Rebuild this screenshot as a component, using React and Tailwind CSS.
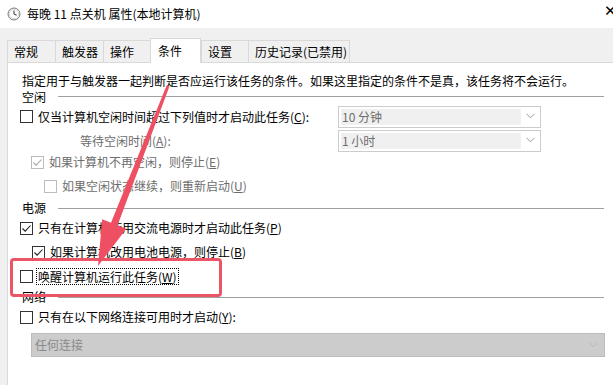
import React from "react";

const FONT = { fontFamily: '"Noto Sans CJK SC", "Noto Sans", sans-serif' };

function Box({ checked, disabled }) {
  const border = disabled ? "border-[#bcbcbc]" : "border-[#333333]";
  return (
    <span className={`inline-flex w-[13px] h-[13px] shrink-0 border ${border} bg-white items-center justify-center`}>
      {checked && (
        <svg width="11" height="11" viewBox="0 0 11 11">
          <path d="M1.5 5.5 L4.2 8.2 L9.5 2.5" fill="none" stroke={disabled ? "#a8a8a8" : "#222"} strokeWidth="1.1" />
        </svg>
      )}
    </span>
  );
}

function Chevron({ color = "#9a9a9a" }) {
  return (
    <svg width="9" height="6" viewBox="0 0 9 6">
      <path d="M0.5 0.8 L4.5 4.8 L8.5 0.8" fill="none" stroke={color} strokeWidth="1" />
    </svg>
  );
}

function Header({ label }) {
  return (
    <div className="flex items-center h-full">
      <span className="ml-[2px] w-[36px] text-black">{label}</span>
      <div className="flex-1 h-px bg-[#a0a0a0] mr-[9px]" />
    </div>
  );
}

function Row({ h, children, className = "" }) {
  return <div className={`flex items-center ${className}`} style={{ height: h }}>{children}</div>;
}

function DisabledCombo({ text }) {
  return (
    <div className="w-[203px] h-[22px] border border-[#cccccc] bg-white flex items-stretch p-[2px] pr-0">
      <div className="flex-1 bg-[#f0f0f0] text-[#6d6d6d] pl-[1px] flex items-center leading-none">{text}</div>
      <div className="w-[19px] flex items-center justify-center pb-[1px]">
        <Chevron />
      </div>
    </div>
  );
}

export default function App() {
  const tabs = [
    { t: "常规", w: 48 },
    { t: "触发器", w: 48 },
    { t: "操作", w: 47 },
    { t: "条件", w: 51, sel: true },
    { t: "设置", w: 47 },
    { t: "历史记录(已禁用)", w: 102 },
  ];
  return (
    <div className="relative w-[613px] h-[385px] overflow-hidden bg-[#f0f0f0] text-[12px] text-black" style={FONT}>
      {/* title bar */}
      <div className="h-[28px] bg-white flex items-center relative">
        <svg className="ml-[7px]" width="14" height="14" viewBox="0 0 14 14">
          <circle cx="7" cy="7" r="6" fill="#f4f4f4" stroke="#7a7a7a" strokeWidth="1" />
          <circle cx="7" cy="7" r="4.6" fill="#fff" stroke="#c8c8c8" strokeWidth="0.6" />
          <path d="M7 3.6 L7 7 L9.6 8.2" fill="none" stroke="#444" strokeWidth="1.1" />
        </svg>
        <span className="ml-[6px] leading-none">每晚 11 点关机 属性(本地计算机)</span>
        <span className="absolute left-[604px] top-[4px] text-[15px] leading-none text-black" style={{ fontFamily: '"DejaVu Sans", sans-serif' }}>✕</span>
      </div>

      {/* tabs */}
      <div className="h-[34px] relative">
        <div className="absolute left-[7px] bottom-0 flex items-end">
          {tabs.map((tab) =>
            tab.sel ? (
              <div
                key={tab.t}
                className="h-[25px] bg-white border border-b-0 border-[#d9d9d9] -mb-px relative z-10 flex items-start pt-[3px]"
                style={{ width: tab.w, paddingLeft: 7 }}
              >
                {tab.t}
              </div>
            ) : (
              <div
                key={tab.t}
                className="h-[22px] bg-[#f0f0f0] border border-b-0 border-r-0 last:border-r border-[#d9d9d9] flex items-center"
                style={{ width: tab.w, paddingLeft: 6 }}
              >
                {tab.t}
              </div>
            )
          )}
        </div>
      </div>

      {/* panel */}
      <div className="ml-[7px] h-[323px] bg-white border-t border-l border-[#d9d9d9] pl-[12px] pt-[10px]">
        <Row h={16}>
          <span className="ml-[2px] whitespace-nowrap">指定用于与触发器一起判断是否应运行该任务的条件。如果这里指定的条件不是真，该任务将不会运行。</span>
        </Row>
        <div style={{ height: 15 }}><Header label="空闲" /></div>
        <Row h={25}>
          <Box />
          <span className="ml-[5px] w-[300px] whitespace-nowrap">仅当计算机空闲时间超过下列值时才启动此任务(<u>C</u>):</span>
          <DisabledCombo text="10 分钟" />
        </Row>
        <Row h={23}>
          <span className="ml-[60px] w-[258px] text-[#6d6d6d]">等待空闲时间(<u>A</u>):</span>
          <DisabledCombo text="1 小时" />
        </Row>
        <Row h={20} className="pl-[11px]">
          <Box checked disabled />
          <span className="ml-[5px] text-[#6d6d6d]">如果计算机不再空闲，则停止(<u>E</u>)</span>
        </Row>
        <Row h={28} className="pl-[24px]">
          <Box disabled />
          <span className="ml-[5px] text-[#6d6d6d]">如果空闲状态继续，则重新启动(<u>U</u>)</span>
        </Row>
        <div style={{ height: 16 }}><Header label="电源" /></div>
        <Row h={24}>
          <Box checked />
          <span className="ml-[5px]">只有在计算机使用交流电源时才启动此任务(<u>P</u>)</span>
        </Row>
        <Row h={24} className="pl-[12px]">
          <Box checked />
          <span className="ml-[5px]">如果计算机改用电池电源，则停止(<u>B</u>)</span>
        </Row>
        <Row h={24}>
          <Box />
          <span className="ml-[3px] px-[1px] border border-dotted border-black leading-[15px]">唤醒计算机运行此任务(<u>W</u>)</span>
        </Row>
        <div style={{ height: 18 }}><Header label="网络" /></div>
        <Row h={22}>
          <Box />
          <span className="ml-[5px]">只有在以下网络连接可用时才启动(<u>Y</u>):</span>
        </Row>
        <div className="mt-[5px] ml-[11px] w-[574px] h-[24px] bg-[#cccccc] border border-[#bdbdbd] flex items-center">
          <span className="flex-1 pl-[3px] text-[#8a8a8a]">任何连接</span>
          <span className="mr-[6px] flex items-center"><Chevron color="#b8b8b8" /></span>
        </div>
      </div>

      {/* annotation overlay */}
      <div className="absolute left-[10px] top-[258px] w-[212px] h-[39px] border-[3px] border-[#ec5566] rounded-[4px] pointer-events-none" />
      <svg className="absolute left-0 top-0 pointer-events-none" width="613" height="385" viewBox="0 0 613 385">
        <polygon
          points="169.4,86.5 166.6,85.5 111,222.7 102.2,219.3 98,266 126.4,228.7 117.6,225.3"
          fill="#ee4f62"
        />
      </svg>
    </div>
  );
}
